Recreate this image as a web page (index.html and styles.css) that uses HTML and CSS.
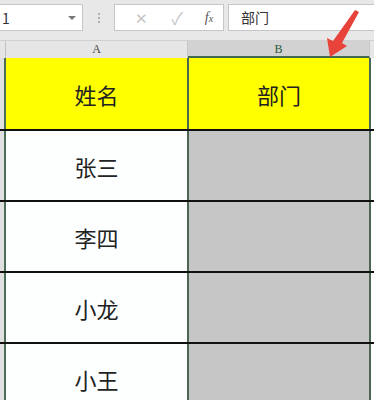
FILE: index.html
```html
<!DOCTYPE html>
<html lang="zh-CN">
<head>
    <meta charset="UTF-8">
    <title>部门</title>
    <link rel="stylesheet" href="styles.css">
</head>
<body>
    <div class="toolbar">
        <div class="namebox">
            <span class="ref">1</span>
            <span class="caret"></span>
        </div>
        <div class="dots"><i></i><i></i><i></i></div>
        <div class="fxbox">
            <span class="btn cancel">✕</span>
            <span class="btn enter">✓</span>
            <span class="btn fx"><em>f</em><small>x</small></span>
        </div>
        <div class="formula">部门</div>
    </div>

    <div class="colheads">
        <div class="corner"></div>
        <div class="colhead">A</div>
        <div class="colhead selected">B</div>
        <div class="colhead rest"></div>
    </div>

    <div class="sheet">
        <div class="row title">
            <div class="rowhead"></div>
            <div class="cell a">姓名</div>
            <div class="cell b">部门</div>
            <div class="cell rest"></div>
        </div>
        <div class="row">
            <div class="rowhead"></div>
            <div class="cell a">张三</div>
            <div class="cell b"></div>
            <div class="cell rest"></div>
        </div>
        <div class="row">
            <div class="rowhead"></div>
            <div class="cell a">李四</div>
            <div class="cell b"></div>
            <div class="cell rest"></div>
        </div>
        <div class="row">
            <div class="rowhead"></div>
            <div class="cell a">小龙</div>
            <div class="cell b"></div>
            <div class="cell rest"></div>
        </div>
        <div class="row">
            <div class="rowhead"></div>
            <div class="cell a">小王</div>
            <div class="cell b"></div>
            <div class="cell rest"></div>
        </div>
    </div>

    <!-- flecha roja que apunta a la columna B -->
    <svg class="arrow" width="374" height="70" viewBox="0 0 374 70">
        <path d="M359 12 L342 43 L347 46 L330 57 L327 38 L333 41 L355 10 Z" fill="#e8433b"/>
    </svg>
</body>
</html>
```

FILE: styles.css
```css
body {
    margin: 0;
    padding: 0;
    width: 374px;
    height: 400px;
    overflow: hidden;
    position: relative;
    background: #e6e6e6;
    font-family: "Noto Sans CJK SC", "Liberation Sans", sans-serif;
}
.toolbar {
    height: 40px;
    display: flex;
    align-items: flex-start;
    padding-top: 4px;
    box-sizing: border-box;
    background: #e8e8e8;
}
.namebox {
    width: 84px;
    height: 27px;
    margin-left: -1px;
    box-sizing: border-box;
    background: #fff;
    border: 1px solid #c6c6c6;
    display: flex;
    align-items: center;
    justify-content: space-between;
    padding: 0 6px 0 2px;
    font-size: 14px;
    color: #333;
}
.caret {
    width: 0;
    height: 0;
    border-left: 4px solid transparent;
    border-right: 4px solid transparent;
    border-top: 4px solid #777;
}
.dots {
    width: 31px;
    height: 27px;
    display: flex;
    flex-direction: column;
    align-items: center;
    justify-content: center;
    gap: 2px;
}
.dots i {
    width: 2px;
    height: 2px;
    background: #b0b0b0;
}
.fxbox {
    width: 110px;
    height: 27px;
    box-sizing: border-box;
    background: #fff;
    border: 1px solid #c6c6c6;
    display: flex;
    align-items: center;
    padding-left: 8px;
}
.btn {
    color: #c4c4c4;
    font-size: 15px;
    width: 36px;
    text-align: center;
}
.btn.enter {
    font-size: 17px;
}
.btn.fx {
    color: #555;
    font-family: "Liberation Serif", serif;
    font-size: 14px;
    width: 28px;
}
.btn.fx small {
    font-size: 10px;
    font-style: italic;
}
.formula {
    flex: 1;
    height: 27px;
    margin-left: 4px;
    box-sizing: border-box;
    background: #fff;
    border: 1px solid #c6c6c6;
    border-right: none;
    padding-left: 12px;
    font-size: 14px;
    line-height: 25px;
    color: #333;
}
.colheads {
    height: 18px;
    display: flex;
    border-top: 1px solid #d0d0d0;
    box-sizing: border-box;
    background: #e6e6e6;
}
.corner {
    width: 5px;
    border-right: 1px solid #c0c0c0;
}
.colhead {
    width: 181px;
    font-family: "Liberation Serif", serif;
    font-size: 12px;
    line-height: 16px;
    text-align: center;
    color: #444;
    border-right: 1px solid #c8c8c8;
}
.colhead.selected {
    width: 182px;
    background: #d2d2d2;
    color: #1f5a3a;
    border-bottom: 2px solid #3f6a4e;
    box-sizing: border-box;
}
.colhead.rest {
    flex: 1;
    border: none;
}
.sheet {
    background: #fff;
}
.row {
    display: flex;
    height: 71px;
    box-sizing: border-box;
    border-bottom: 2px solid #111;
}
.row.title {
    height: 73px;
}
.rowhead {
    width: 4px;
    background: #e0e0e0;
    border-right: 2px solid #4c6e58;
}
.cell {
    display: flex;
    align-items: center;
    justify-content: center;
    font-size: 22px;
    color: #222;
}
.cell.a {
    width: 181px;
    background: #fdfffe;
}
.cell.b {
    width: 180px;
    background: #c6c6c6;
    border-left: 2px solid #4c6656;
    border-right: 2px solid #4c6656;
}
.title .cell.a,
.title .cell.b {
    background: #ffff00;
}
.cell.rest {
    flex: 1;
    background: #fff;
}
.arrow {
    position: absolute;
    left: 0;
    top: 0;
}
```
